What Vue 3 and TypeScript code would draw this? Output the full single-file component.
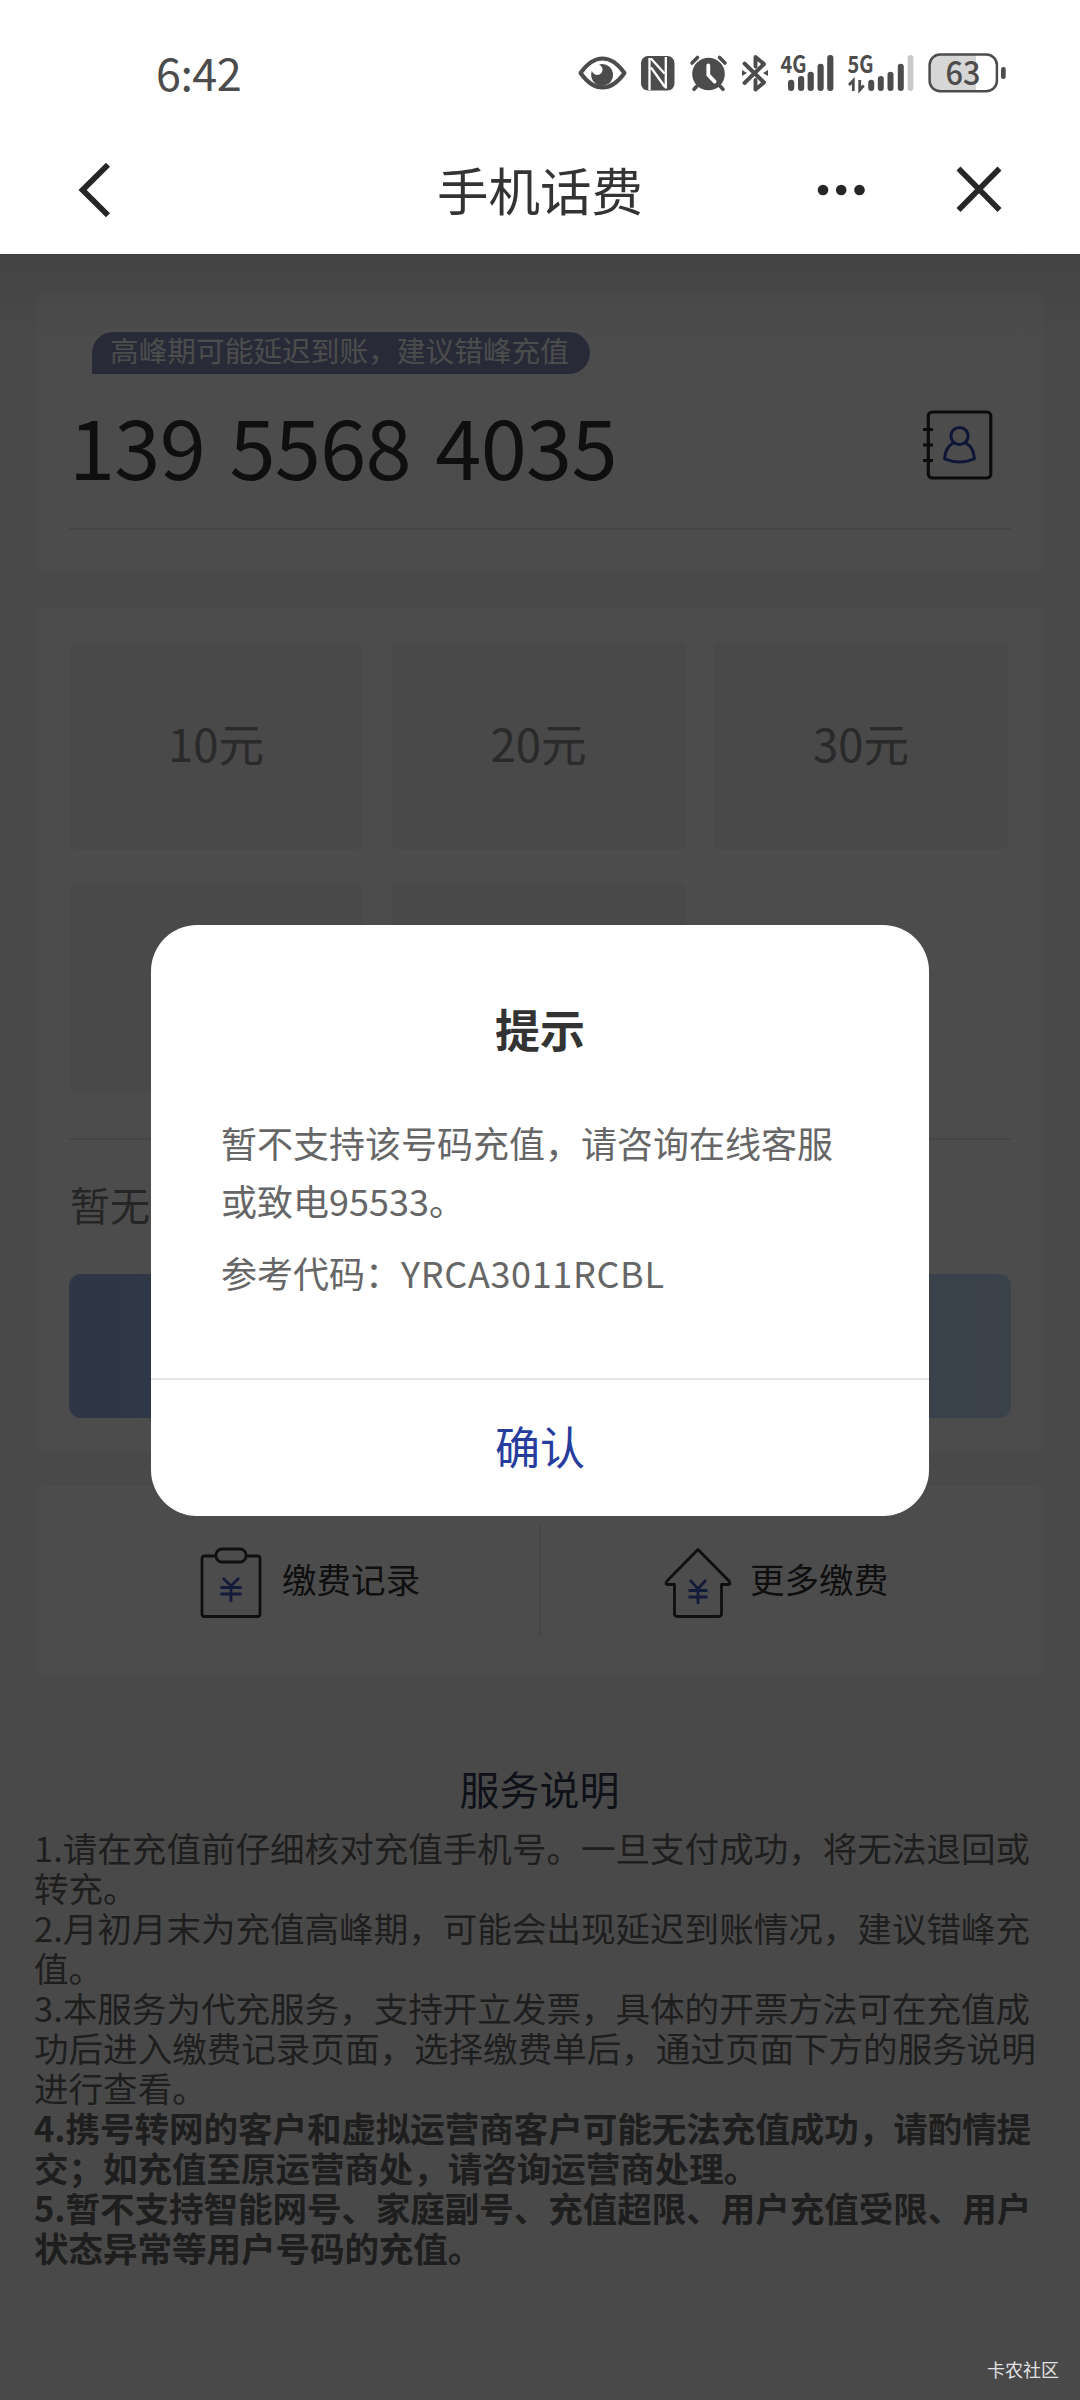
<script setup lang="ts">
interface Note {
  lines: string[]
  strong?: boolean
}

const phone = '139 5568 4035'
const amounts: string[] = ['10元', '20元', '30元', '', '']

const notes: Note[] = [
  { lines: ['1.请在充值前仔细核对充值手机号。一旦支付成功，将无法退回或', '转充。'] },
  { lines: ['2.月初月末为充值高峰期，可能会出现延迟到账情况，建议错峰充', '值。'] },
  {
    lines: [
      '3.本服务为代充服务，支持开立发票，具体的开票方法可在充值成',
      '功后进入缴费记录页面，选择缴费单后，通过页面下方的服务说明',
      '进行查看。',
    ],
  },
  {
    strong: true,
    lines: ['4.携号转网的客户和虚拟运营商客户可能无法充值成功，请酌情提', '交；如充值至原运营商处，请咨询运营商处理。'],
  },
  {
    strong: true,
    lines: ['5.暂不支持智能网号、家庭副号、充值超限、用户充值受限、用户', '状态异常等用户号码的充值。'],
  },
]
</script>

<template>
  <div class="screen">
    <header class="top">
      <div class="status">
        <span class="time">6:42</span>
        <svg class="status-icons" viewBox="576 50 432 46" width="432" height="46" fill="#4c4c4c">
          <!-- eye -->
          <path d="M580.5 73C588 62.500 595 58.500 602.500 58.500S617 62.500 624.500 73C617 83.500 610 87.500 602.500 87.500S588 83.500 580.500 73Z" fill="none" stroke="#4c4c4c" stroke-width="4" stroke-linejoin="round" />
          <path d="M602 64a11 11 0 1 1-10.600 13.500q-.8-3.500.4-6.500q2 4 5.600 4q4.600-.6 5.200-5.200q-.2-3.200-3.600-5.200q1.500-.6 3-.6Z" />
          <!-- nfc -->
          <rect x="641" y="56" width="33.500" height="34.500" rx="7" />
          <path d="M649.500 58V90M665.800 57V88.500M651 58.500L664.500 73.500M651 67.500L665 87" stroke="#fff" stroke-width="2.300" fill="none" />
          <!-- alarm -->
          <circle cx="708.500" cy="74" r="16.300" />
          <path d="M692 63l5.500-5.500M725 63l-5.500-5.500" stroke="#4c4c4c" stroke-width="3.600" stroke-linecap="round" />
          <path d="M698 85l-4 4.300M719 85l4 4.300" stroke="#4c4c4c" stroke-width="3.600" stroke-linecap="round" />
          <path d="M708.300 65.500v9.500l6.300 6.600" stroke="#fff" stroke-width="3.800" fill="none" stroke-linecap="round" stroke-linejoin="round" />
          <!-- bluetooth -->
          <path d="M744.500 63.500L764 82.500L755.500 89.500V80M744.500 83L764 64L755.500 57V66.500" fill="none" stroke="#4c4c4c" stroke-width="3.900" stroke-linejoin="round" stroke-linecap="round" />
          <path d="M742 70l5 3-5 3zM768 70l-5 3 5 3z" />
          <!-- signal 4G -->
          <text x="780.500" y="73" font-size="23.500" textLength="26" lengthAdjust="spacingAndGlyphs" class="net">4G</text>
          <rect x="788" y="79.700" width="6.200" height="11.300" rx="3" />
          <rect x="798" y="76" width="6.200" height="15" rx="3" />
          <rect x="807.600" y="71.700" width="6.200" height="19.300" rx="3" />
          <rect x="817.500" y="63.700" width="6.200" height="27.300" rx="3" />
          <rect x="827.200" y="55" width="6.200" height="36" rx="3" />
          <!-- signal 5G -->
          <text x="847.500" y="73" font-size="23.500" textLength="26" lengthAdjust="spacingAndGlyphs" class="net">5G</text>
          <path d="M849 85l4.300-4.500V91M859.700 80V90l4-4.500" fill="none" stroke="#4c4c4c" stroke-width="2.800" />
          <rect x="868.200" y="79.700" width="6" height="11.300" rx="3" />
          <rect x="877.800" y="76" width="6" height="15" rx="3" />
          <rect x="887.500" y="71.700" width="6" height="19.300" rx="3" />
          <rect x="897.800" y="63.700" width="6" height="27.300" rx="3" />
          <rect x="907.600" y="55" width="5.800" height="36" rx="2.900" fill="#c9c9c9" />
          <!-- battery -->
          <path d="M976 55H940a10.500 10.500 0 0 0-10.500 10.500V80.500a10.500 10.500 0 0 0 10.500 10.500H976Z" fill="#d6d6d6" />
          <rect x="929.600" y="54.500" width="67.300" height="36.800" rx="10.500" fill="none" stroke="#4c4c4c" stroke-width="2.500" />
          <rect x="1001" y="67" width="4.700" height="12" rx="2.300" />
          <text x="963" y="85.200" font-size="33" text-anchor="middle" textLength="35" lengthAdjust="spacingAndGlyphs" class="level">63</text>
        </svg>
      </div>
      <div class="nav">
        <svg class="back" viewBox="0 0 32 56" width="32" height="56">
          <path d="M30 2.800L4.600 28L30 53.200" fill="none" stroke="#262626" stroke-width="5.800" />
        </svg>
        <h1>手机话费</h1>
        <div class="nav-actions">
          <svg viewBox="0 0 48 12" width="48" height="12" fill="#262626">
            <circle cx="6" cy="6" r="5.300" /><circle cx="24.200" cy="6" r="5.300" /><circle cx="42.500" cy="6" r="5.300" />
          </svg>
          <svg viewBox="0 0 46 46" width="46" height="46">
            <path d="M2.500 1.500L43.500 43M43.500 1.500L2.500 43" stroke="#262626" stroke-width="5.600" />
          </svg>
        </div>
      </div>
    </header>

    <main class="page">
      <section class="card phone-card">
        <div class="tip">高峰期可能延迟到账，建议错峰充值</div>
        <div class="phone-row">
          <span class="phone">{{ phone }}</span>
          <svg viewBox="0 0 70 70" width="70" height="70" fill="none">
            <rect x="5.300" y="2" width="62.500" height="66" rx="4" stroke="#2b2b2b" stroke-width="3.200" />
            <path d="M0 19.500h10M0 35h10M0 50.500h10" stroke="#2b2b2b" stroke-width="3.200" />
            <circle cx="36.500" cy="26" r="8.600" stroke="#3048b4" stroke-width="3" />
            <path d="M30.500 32.500Q22 38 21.600 48.800Q36.500 55 51.400 48.800Q51 38 42.500 32.500" stroke="#3048b4" stroke-width="3" stroke-linejoin="round" />
          </svg>
        </div>
      </section>

      <section class="card amount-card">
        <div class="grid">
          <div v-for="(a, i) in amounts" :key="i" class="cell">{{ a }}</div>
        </div>
        <div class="coupon">暂无</div>
        <div class="pay"></div>
      </section>

      <section class="card links">
        <div class="link">
          <svg viewBox="0 0 62 72" width="62" height="72" fill="none">
            <path d="M16 9H4.500Q2 9 2 11.500V67Q2 69.500 4.500 69.500H57.500Q60 69.500 60 67V11.500Q60 9 57.500 9H46" stroke="#333" stroke-width="2.800" />
            <rect x="16" y="2" width="30" height="13" rx="6" stroke="#333" stroke-width="2.800" />
            <path d="M23 31L31 39L39 31M20.500 40.500H41.500M20.500 47H41.500M31 39V55" stroke="#4058c4" stroke-width="2.800" />
          </svg>
          <span>缴费记录</span>
        </div>
        <i class="split"></i>
        <div class="link more">
          <svg viewBox="0 0 68 72" width="68" height="72" fill="none">
            <path d="M34 2.500L65 34Q67.500 37.500 64 37.500H57.500V66.500Q57.500 69.500 54.500 69.500H13.500Q10.500 69.500 10.500 66.500V37.500H4Q.5 37.500 3 34Z" stroke="#333" stroke-width="2.800" stroke-linejoin="round" />
            <path d="M26 33L34 42L42 33M24.500 43.500H43.500M24.500 50H43.500M34 42V57" stroke="#4058c4" stroke-width="2.800" />
          </svg>
          <span>更多缴费</span>
        </div>
      </section>

      <section class="notes">
        <h2>服务说明</h2>
        <div v-for="(n, i) in notes" :key="i" :class="{ strong: n.strong }">
          <p v-for="l in n.lines" :key="l">{{ l }}</p>
        </div>
      </section>
    </main>

    <div class="mask"></div>
    <div class="dialog" role="dialog">
      <h3>提示</h3>
      <div class="message">
        <p>暂不支持该号码充值，请咨询在线客服<br />或致电95533。</p>
        <p class="code">参考代码：<span>YRCA3011RCBL</span></p>
      </div>
      <button type="button">确认</button>
    </div>
    <span class="site">卡农社区</span>
  </div>
</template>

<style>
body {
  margin: 0;
}
</style>

<style scoped>
.screen {
  position: relative;
  width: 1080px;
  height: 2400px;
  overflow: hidden;
  background: #f6f6f6;
  font-family: "Noto Sans CJK SC", "Noto Sans", sans-serif;
  color: #333;
  text-spacing-trim: space-all;
}
h1, h2, h3, p {
  margin: 0;
  font-weight: 400;
}
svg {
  display: block;
  flex: none;
  overflow: visible;
}
.top {
  box-sizing: border-box;
  height: 254px;
  background: #fff;
}
.status {
  display: flex;
  justify-content: space-between;
  box-sizing: border-box;
  height: 126px;
  padding: 50px 72px 0 156px;
}
.time {
  height: 46px;
  line-height: 43px;
  font-size: 45px;
  letter-spacing: -0.6px;
  color: #4c4c4c;
}
.net {
  font-weight: 700;
}
.level {
  font-weight: 500;
}
.nav {
  display: grid;
  grid-template-columns: 1fr auto 1fr;
  align-items: center;
  height: 128px;
  padding: 0 78px;
}
.nav h1 {
  font-size: 51.500px;
  line-height: 60px;
  margin-top: -3px;
}
.nav-actions {
  display: flex;
  align-items: center;
  justify-content: flex-end;
  gap: 91px;
}
.page {
  padding: 38px 36px 0;
}
.card {
  box-sizing: border-box;
  width: 1008px;
  background: #fff;
  border-radius: 8px;
}
.phone-card {
  height: 279px;
  padding: 40px 33px 0;
}
.tip {
  box-sizing: border-box;
  width: 498px;
  height: 42px;
  margin-left: 23px;
  padding-left: 18px;
  border-radius: 21px 21px 21px 0;
  background: #858cb7;
  color: #fff;
  font-size: 28.7px;
  line-height: 36px;
  white-space: nowrap;
}
.phone-row {
  display: flex;
  align-items: center;
  justify-content: space-between;
  height: 154px;
  padding-right: 18px;
  border-bottom: 2px solid #e8e8e8;
}
.phone {
  font-size: 83px;
  line-height: 100px;
  letter-spacing: -0.7px;
  word-spacing: 6.500px;
  margin-top: -14px;
}
.phone-row svg {
  margin-top: -13px;
}
.amount-card {
  height: 844px;
  margin-top: 37px;
  padding: 35px 33px 0;
}
.grid {
  display: grid;
  grid-template-columns: repeat(3, 294px);
  gap: 34px 28.500px;
  height: 495px;
  grid-auto-rows: 207px;
  border-bottom: 2px solid #e8e8e8;
}
.cell {
  background: #f3f3f3;
  border-radius: 6px;
  text-align: center;
  font-size: 45.500px;
  line-height: 199px;
  color: #8c8c8c;
}
.coupon {
  height: 134px;
  line-height: 129px;
  padding-left: 1px;
  font-size: 40px;
  color: #808080;
}
.pay {
  height: 144px;
  border-radius: 12px;
  background: linear-gradient(90deg, #9db6e8, #c2dcfa);
}
.links {
  display: flex;
  align-items: flex-start;
  height: 190px;
  margin-top: 34px;
  padding-top: 40px;
}
.link {
  display: flex;
  align-items: center;
  flex: 0 0 503px;
  box-sizing: border-box;
  height: 113px;
  padding-left: 164px;
  gap: 20px;
  font-size: 34.56px;
}
.link.more {
  padding-left: 123px;
  gap: 18px;
}
.link span {
  margin-top: -10px;
}
.split {
  width: 2px;
  height: 111px;
  background: #e8e8e8;
}
.notes {
  margin: 87px 0 0 -2px;
  font-size: 34.56px;
  line-height: 40px;
  color: #666;
  white-space: nowrap;
}
.notes h2 {
  height: 64px;
  line-height: 50px;
  padding-left: 1px;
  font-size: 40px;
  text-align: center;
  color: #343a52;
}
.strong p {
  font-weight: 700;
  letter-spacing: -0.06px;
}
.mask {
  position: absolute;
  inset: 254px 0 0;
  background: linear-gradient(rgba(0, 0, 0, 0.08), rgba(0, 0, 0, 0) 90px), rgba(0, 0, 0, 0.7);
}
.dialog {
  position: absolute;
  left: 151px;
  top: 925px;
  display: flex;
  flex-direction: column;
  width: 778px;
  height: 591px;
  border-radius: 46px;
  background: #fff;
}
.dialog h3 {
  height: 189px;
  line-height: 207px;
  font-size: 45px;
  font-weight: 700;
  text-align: center;
}
.message {
  flex: 1;
  padding: 0 70px;
  font-size: 36px;
  line-height: 57.6px;
  color: #666;
  white-space: nowrap;
}
.code {
  margin-top: 15px;
}
.code span {
  letter-spacing: 0.65px;
}
.dialog button {
  height: 138px;
  padding: 0 0 6px;
  border: 0;
  border-top: 2px solid #e6e6e6;
  background: none;
  font: inherit;
  font-size: 45px;
  color: #263d9e;
}
.site {
  position: absolute;
  right: 21px;
  bottom: 18px;
  font-size: 18px;
  line-height: 26px;
  color: #e2e2e2;
}
</style>
